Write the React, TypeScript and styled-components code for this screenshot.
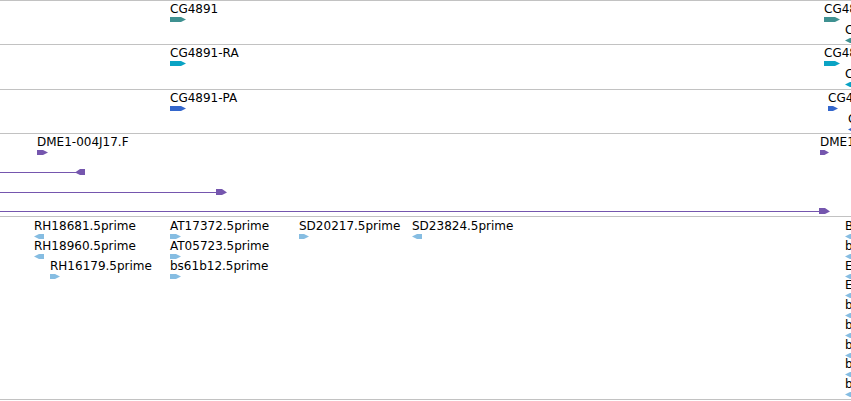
import React from 'react';
import styled, { createGlobalStyle } from 'styled-components';

const Global = createGlobalStyle`
  html, body { margin: 0; padding: 0; background: #ffffff; }
  body { font-family: "DejaVu Sans", "Noto Sans", sans-serif; }
`;

const Browser = styled.div`
  width: 851px;
  height: 401px;
  overflow: hidden;
  display: flex;
  flex-direction: column;
  border-top: 1px solid #c2c2c2;
  background: #ffffff;
`;

const Track = styled.div<{ $h: number }>`
  position: relative;
  flex: none;
  height: ${(p) => p.$h}px;
  border-bottom: 1px solid #c2c2c2;
  overflow: hidden;
`;

const Feature = styled.div`
  position: absolute;
  display: flex;
  flex-direction: column;
  align-items: flex-start;
  gap: 1px;
  white-space: nowrap;
`;

const Label = styled.span`
  display: block;
  padding-top: 1px;
  font-family: "DejaVu Sans", sans-serif;
  font-size: 12px;
  line-height: 13px;
  color: #000000;
`;

const Span = styled.div`
  position: absolute;
  left: 0;
  height: 7px;
`;

type Dir = 'right' | 'left';

const Arrow: React.FC<{ w: number; dir: Dir; color: string; h?: number }> = ({ w, dir, color, h = 5 }) => {
  const head = Math.min(5, w / 2);
  const pts =
    dir === 'right'
      ? `0,0 ${w - head},0 ${w},${h / 2} ${w - head},${h} 0,${h}`
      : `${head},0 ${w},0 ${w},${h} ${head},${h} 0,${h / 2}`;
  return (
    <svg width={w} height={h} viewBox={`0 0 ${w} ${h}`} style={{ display: 'block' }}>
      <polygon points={pts} fill={color} />
    </svg>
  );
};

type Feat = { x: number; y: number; label: string; dir: Dir; w: number };

const TrackFeatures: React.FC<{ feats: Feat[]; color: string }> = ({ feats, color }) => (
  <>
    {feats.map((f, i) => (
      <Feature key={i} style={{ left: f.x, top: f.y }}>
        <Label>{f.label}</Label>
        <Arrow w={f.w} dir={f.dir} color={color} />
      </Feature>
    ))}
  </>
);

const LongFeature: React.FC<{ y: number; end: number; dir: Dir; color: string }> = ({ y, end, dir, color }) => {
  const boxW = dir === 'left' ? 10 : 11;
  const start = end - boxW;
  return (
    <Span style={{ top: y - 3, width: end }}>
      <svg width={end} height={7} viewBox={`0 0 ${end} 7`} style={{ display: 'block' }}>
        <rect x={0} y={3} width={start + 1} height={1} fill={color} />
        {dir === 'right' ? (
          <polygon points={`${start},0 ${end - 5},0 ${end},3.5 ${end - 5},6 ${start},6`} fill={color} />
        ) : (
          <polygon points={`${start + 5},0 ${end},0 ${end},6 ${start + 5},6 ${start},3.5`} fill={color} />
        )}
      </svg>
    </Span>
  );
};

const TEAL = '#3f9191';
const CYAN = '#0aa3c4';
const BLUE = '#3366cc';
const PURPLE = '#7556ae';
const LIGHT = '#86bde2';

const track1: Feat[] = [
  { x: 170, y: 1, label: 'CG4891', dir: 'right', w: 16 },
  { x: 824, y: 1, label: 'CG4896', dir: 'right', w: 16 },
  { x: 845, y: 22, label: 'CG4893', dir: 'left', w: 16 },
];

const track2: Feat[] = [
  { x: 170, y: 1, label: 'CG4891-RA', dir: 'right', w: 16 },
  { x: 824, y: 1, label: 'CG4896-RA', dir: 'right', w: 16 },
  { x: 845, y: 22, label: 'CG4893-RA', dir: 'left', w: 16 },
];

const track3: Feat[] = [
  { x: 170, y: 1, label: 'CG4891-PA', dir: 'right', w: 16 },
  { x: 828, y: 1, label: 'CG4896-PA', dir: 'right', w: 10 },
  { x: 848, y: 22, label: 'CG4893-PA', dir: 'left', w: 10 },
];

const track4: Feat[] = [
  { x: 37, y: 1, label: 'DME1-004J17.F', dir: 'right', w: 11 },
  { x: 820, y: 1, label: 'DME1-004J18.F', dir: 'right', w: 9 },
];

const rowY = (k: number) => 2 + Math.round(k * 19.75);

const rightColumn = [
  'BT012345.5prime',
  'bs09c11.5prime',
  'EC276583.5prime',
  'EK091734.5prime',
  'bs12d04.5prime',
  'bs30f08.5prime',
  'bs27a06.5prime',
  'bs44h02.5prime',
  'bs18e10.5prime',
];

const track5: Feat[] = [
  { x: 34, y: rowY(0), label: 'RH18681.5prime', dir: 'left', w: 10 },
  { x: 34, y: rowY(1), label: 'RH18960.5prime', dir: 'left', w: 10 },
  { x: 50, y: rowY(2), label: 'RH16179.5prime', dir: 'right', w: 10 },
  { x: 170, y: rowY(0), label: 'AT17372.5prime', dir: 'right', w: 11 },
  { x: 170, y: rowY(1), label: 'AT05723.5prime', dir: 'right', w: 11 },
  { x: 170, y: rowY(2), label: 'bs61b12.5prime', dir: 'right', w: 11 },
  { x: 299, y: rowY(0), label: 'SD20217.5prime', dir: 'right', w: 10 },
  { x: 412, y: rowY(0), label: 'SD23824.5prime', dir: 'left', w: 10 },
  ...rightColumn.map((label, k) => ({ x: 845, y: rowY(k), label, dir: 'left' as Dir, w: 10 })),
];

export default function App() {
  return (
    <>
      <Global />
      <Browser>
        <Track $h={43}>
          <TrackFeatures feats={track1} color={TEAL} />
        </Track>
        <Track $h={44}>
          <TrackFeatures feats={track2} color={CYAN} />
        </Track>
        <Track $h={43}>
          <TrackFeatures feats={track3} color={BLUE} />
        </Track>
        <Track $h={82}>
          <TrackFeatures feats={track4} color={PURPLE} />
          <LongFeature y={38} end={85} dir="left" color={PURPLE} />
          <LongFeature y={58} end={227} dir="right" color={PURPLE} />
          <LongFeature y={77} end={830} dir="right" color={PURPLE} />
        </Track>
        <Track $h={182}>
          <TrackFeatures feats={track5} color={LIGHT} />
        </Track>
      </Browser>
    </>
  );
}
